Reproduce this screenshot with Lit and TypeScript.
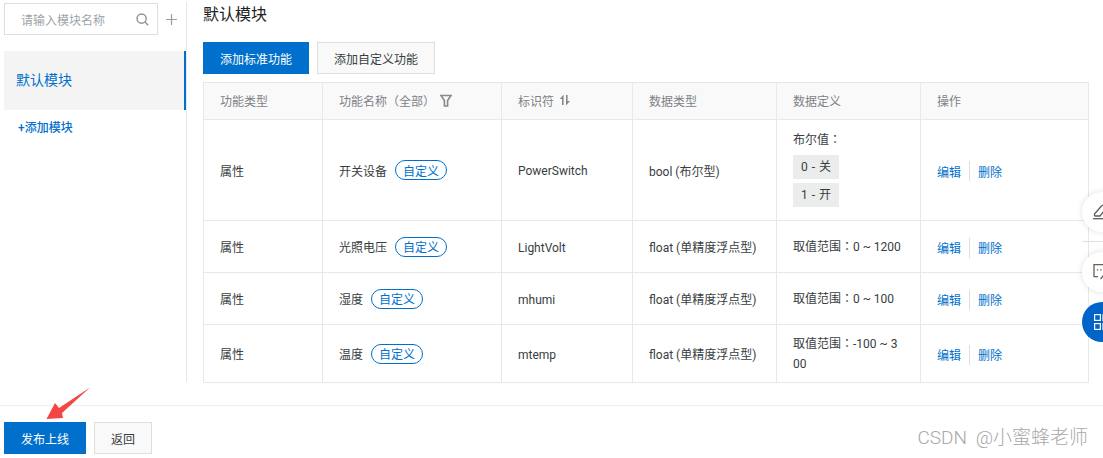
import { LitElement, html, css } from "lit";
import { customElement } from "lit/decorators.js";

const rows = [
  { h: 101, name: "开关设备", id: "PowerSwitch", type: "bool (布尔型)", def: null as string | null },
  { h: 52, name: "光照电压", id: "LightVolt", type: "float (单精度浮点型)", def: "取值范围：0 ~ 1200" },
  { h: 52, name: "湿度", id: "mhumi", type: "float (单精度浮点型)", def: "取值范围：0 ~ 100" },
  { h: 57, name: "温度", id: "mtemp", type: "float (单精度浮点型)", def: "取值范围：-100 ~ 300" },
];

@customElement("app-root")
export class AppRoot extends LitElement {
  static styles = css`
    :host {
      display: block;
      width: 1103px;
      height: 458px;
      overflow: hidden;
      position: relative;
      background: #fff;
      font-family: "Roboto", "Noto Sans CJK SC", sans-serif;
      font-size: 12px;
      color: #373d41;
      text-spacing-trim: space-all;
    }
    .top {
      display: flex;
      height: 382px;
      padding-top: 2px;
      box-sizing: border-box;
    }
    .side {
      width: 187px;
      flex: none;
      box-sizing: border-box;
      padding: 1px 0 0 4px;
      border-right: 1px solid #e8e8e8;
    }
    .searchrow {
      display: flex;
      align-items: center;
    }
    .search {
      width: 154px;
      height: 32px;
      border: 1px solid #dedede;
      box-sizing: border-box;
      display: flex;
      align-items: center;
      justify-content: space-between;
      padding: 0 8px 0 16px;
      color: #a0a4a7;
    }
    .plus {
      margin-left: 8px;
      display: flex;
    }
    .mod {
      margin-top: 16px;
      height: 59px;
      width: 182px;
      box-sizing: border-box;
      background: #f4f4f4;
      border-right: 2px solid #0070cc;
      display: flex;
      align-items: center;
      padding: 0 0 4px 12px;
      color: #0070cc;
      font-size: 14px;
    }
    .add {
      margin: 8px 0 0 14px;
      color: #0070cc;
      font-weight: 500;
    }
    .main {
      flex: 1;
      min-width: 0;
      padding-left: 16px;
    }
    h2 {
      margin: 0;
      height: 24px;
      font-size: 16px;
      font-weight: 400;
      line-height: 26px;
      color: #222;
    }
    .btns {
      display: flex;
      gap: 8px;
      margin-top: 16px;
    }
    .btn {
      height: 32px;
      box-sizing: border-box;
      display: flex;
      align-items: center;
      justify-content: center;
      font-size: 12px;
    }
    .primary {
      background: #0070cc;
      color: #fff;
    }
    .ghost {
      background: #f9f9f9;
      border: 1px solid #dedede;
      color: #373d41;
    }
    .w106 { width: 106px; }
    .w118 { width: 118px; }
    .table {
      width: 886px;
      margin-top: 8px;
      border: 1px solid #e8e8e8;
      box-sizing: border-box;
      display: grid;
      grid-template-columns: 119px 179px 131px 144px 144px 1fr;
    }
    .cell {
      box-sizing: border-box;
      padding: 0 16px;
      border-right: 1px solid #e8e8e8;
      border-bottom: 1px solid #e8e8e8;
      display: flex;
      align-items: center;
      color: #373d41;
      min-width: 0;
    }
    .cell.last { border-right: 0; }
    .cell.end { border-bottom: 0; }
    .head {
      height: 37px;
      background: #f9f9f9;
      color: #7d8286;
      gap: 5px;
      padding-bottom: 2px;
    }
    .name { gap: 8px; }
    .idcell { padding-top: 2px; }
    .tag {
      width: 52px;
      height: 20px;
      box-sizing: border-box;
      border: 1px solid #0070cc;
      border-radius: 10px;
      color: #0070cc;
      display: flex;
      align-items: center;
      justify-content: center;
      font-size: 12px;
    }
    .def {
      display: block;
      line-height: 20px;
      word-break: break-all;
      font-family: "Roboto", "Noto Sans CJK TC", sans-serif;
    }
    .bool {
      display: flex;
      flex-direction: column;
      align-items: flex-start;
      gap: 4px;
      line-height: 20px;
      padding-bottom: 4px;
    }
    .boollabel {
      margin-bottom: 1px;
      font-family: "Roboto", "Noto Sans CJK TC", sans-serif;
    }
    .chip {
      background: #ebecec;
      width: 46px;
      height: 24px;
      display: flex;
      align-items: center;
      justify-content: center;
      word-spacing: 1px;
    }
    .ops { color: #0070cc; padding-top: 2px; }
    .ops i {
      display: block;
      width: 1px;
      height: 20px;
      background: #dedede;
      margin: 0 8px;
    }
    .footer {
      position: absolute;
      left: 0;
      right: 0;
      top: 405px;
      bottom: 0;
      border-top: 1px solid #f0f0f0;
      box-sizing: border-box;
      padding: 16px 0 0 4px;
      display: flex;
      gap: 8px;
    }
    .w82 { width: 82px; }
    .w58 { width: 58px; }
    .float {
      position: absolute;
      left: 1082px;
      width: 40px;
      height: 40px;
      border-radius: 50%;
      background: #fff;
      box-shadow: 0 0 6px rgba(0,0,0,0.12);
      display: flex;
      align-items: center;
      padding-left: 11px;
      box-sizing: border-box;
    }
    .float.blue { background: #0064c8; box-shadow: none; }
    .sep {
      position: absolute;
      left: 1082px;
      top: 241px;
      width: 21px;
      height: 1px;
      background: #e0e0e0;
    }
    .arrow { position: absolute; left: 46px; top: 387px; }
    .mark {
      position: absolute;
      right: 15px;
      top: 425px;
      font-size: 19px;
      line-height: 26px;
      color: #a8a8a8;
      font-family: "Roboto", "Noto Sans CJK SC", sans-serif;
      font-weight: 300;
      word-spacing: 4px;
    }
  `;

  private header() {
    return html`
      <div class="cell head">功能类型</div>
      <div class="cell head">功能名称（全部）
        <svg width="12" height="13" viewBox="0 0 12 13" fill="none" stroke="#85898c" stroke-width="1.6">
          <path d="M1 1.5h10L7.6 6.5v5.5H4.4V6.5z" />
        </svg>
      </div>
      <div class="cell head">标识符
        <svg width="12" height="12" viewBox="0 0 12 12" fill="#85898c">
          <path d="M4.6 0.5L0.8 5H3V11H4.6z M7 1V11.5L11 7H8.6V1z" />
        </svg>
      </div>
      <div class="cell head">数据类型</div>
      <div class="cell head">数据定义</div>
      <div class="cell head last">操作</div>
    `;
  }

  private row(r: (typeof rows)[number], end: boolean) {
    const c = end ? "cell end" : "cell";
    const style = `height:${r.h}px`;
    return html`
      <div class=${c} style=${style}>属性</div>
      <div class="${c} name" style=${style}>${r.name}<span class="tag">自定义</span></div>
      <div class="${c} idcell" style=${style}>${r.id}</div>
      <div class=${c} style=${style}>${r.type}</div>
      <div class=${c} style=${style}>
        ${r.def
          ? html`<span class="def">${r.def}</span>`
          : html`<div class="bool">
              <span class="boollabel">布尔值：</span>
              <span class="chip">0 - 关</span>
              <span class="chip">1 - 开</span>
            </div>`}
      </div>
      <div class="${c} last ops" style=${style}>编辑<i></i>删除</div>
    `;
  }

  render() {
    return html`
      <div class="top">
        <aside class="side">
          <div class="searchrow">
            <div class="search">
              <span>请输入模块名称</span>
              <svg width="13" height="13" viewBox="0 0 13 13" fill="none" stroke="#8f9396" stroke-width="1.4">
                <circle cx="5.6" cy="5.6" r="4.6" />
                <path d="M9 9l3.2 3.2" />
              </svg>
            </div>
            <span class="plus">
              <svg width="11" height="11" viewBox="0 0 11 11" stroke="#9a9da0" stroke-width="1.2">
                <path d="M5.5 0v11M0 5.5h11" />
              </svg>
            </span>
          </div>
          <div class="mod">默认模块</div>
          <div class="add">+添加模块</div>
        </aside>
        <main class="main">
          <h2>默认模块</h2>
          <div class="btns">
            <div class="btn primary w106">添加标准功能</div>
            <div class="btn ghost w118">添加自定义功能</div>
          </div>
          <div class="table">
            ${this.header()}
            ${rows.map((r, i) => this.row(r, i === rows.length - 1))}
          </div>
        </main>
      </div>

      <div class="float" style="top:192px">
        <svg width="18" height="18" viewBox="0 0 18 18" fill="none" stroke="#5f5a55" stroke-width="1.3">
          <path d="M1.5 13V11L8 3.5l2-1.5" /><path d="M1.5 13H7L11 8" /><path d="M0 15.7h18" />
        </svg>
      </div>
      <div class="sep"></div>
      <div class="float" style="top:252px">
        <svg width="18" height="18" viewBox="0 0 18 18" fill="none" stroke="#6b6056" stroke-width="1.3">
          <path d="M17 1.7H1v12h4" /><path d="M7.5 16L10.5 12.5" />
          <path d="M3.8 6.8h1.4M7.2 6.8h1.4" />
        </svg>
      </div>
      <div class="float blue" style="top:302px">
        <svg width="18" height="18" viewBox="0 0 18 18" fill="none" stroke="#fff" stroke-width="1.2">
          <rect x="1.6" y="1.6" width="5.8" height="5.8" /><rect x="1.6" y="10.6" width="5.8" height="5.8" />
          <rect x="10" y="1.6" width="5.8" height="5.8" /><rect x="10" y="10.6" width="5.8" height="5.8" />
        </svg>
      </div>

      <footer class="footer">
        <div class="btn primary w82">发布上线</div>
        <div class="btn ghost w58">返回</div>
      </footer>

      <svg class="arrow" width="46" height="34" viewBox="0 0 46 34">
        <path d="M44 0.5L13 21L9 16L0.5 32L17 31L16 26z" fill="#f54545" />
      </svg>

      <div class="mark">CSDN @小蜜蜂老师</div>
    `;
  }
}
